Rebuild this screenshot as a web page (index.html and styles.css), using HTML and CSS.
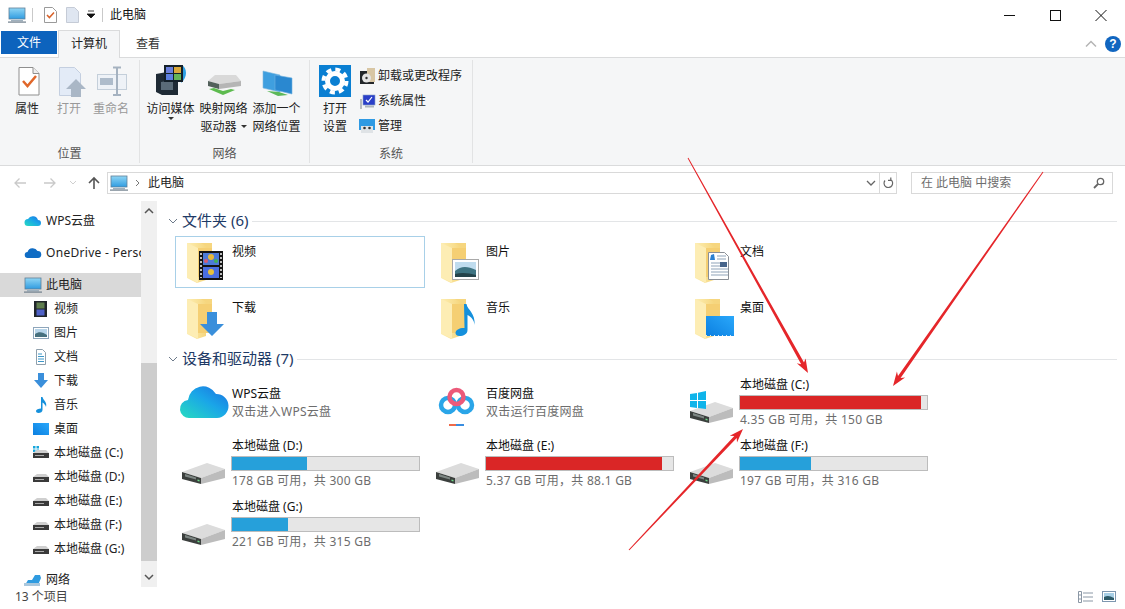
FILE: index.html
```html
<!DOCTYPE html>
<html lang="zh-CN">
<head>
<meta charset="utf-8">
<title>此电脑</title>
<link rel="stylesheet" href="styles.css">
</head>
<body>
<svg class="sprite" aria-hidden="true">
  <defs>
    <linearGradient id="scr" x1="0" y1="0" x2="0" y2="1"><stop offset="0" stop-color="#8fd6f5"/><stop offset="1" stop-color="#2f9be0"/></linearGradient>
    <linearGradient id="fold" x1="0" y1="0" x2="1" y2="0"><stop offset="0" stop-color="#fdeeb3"/><stop offset="1" stop-color="#f6d77f"/></linearGradient>
    <linearGradient id="wps" x1="0" y1="1" x2="1" y2="0"><stop offset="0" stop-color="#27dcc0"/><stop offset=".55" stop-color="#1aa5e8"/><stop offset="1" stop-color="#1b6fe0"/></linearGradient>
    <linearGradient id="dsk" x1="0" y1="1" x2="1" y2="0"><stop offset="0" stop-color="#0b7fe0"/><stop offset="1" stop-color="#2aa8fb"/></linearGradient>

    <g id="pc"><rect x="1" y="1" width="16" height="11" fill="url(#scr)" stroke="#5f7f98" stroke-width=".8"/><rect x="3" y="13" width="12" height="1.4" fill="#9fb0bd"/><rect x="0" y="14.5" width="18" height="1.2" fill="#6f7f8c"/></g>
    <g id="checkdoc"><path d="M.5.5h8l4 4v11H.5z" fill="#fff" stroke="#9a9a9a"/><path d="M3 8l2.4 2.6L10 5.5" fill="none" stroke="#d8622a" stroke-width="1.5"/></g>

    <g id="folder"><path d="M12 2h17v34H12z" fill="#f6d67f"/><path d="M4 2h14l5 3v34l-9 3-10-5z" fill="url(#fold)"/><path d="M15 7h14v29H15z" fill="#f5cf73"/><path d="M4 2l11 5v35L4 36z" fill="#fdedb4"/></g>
    <g id="ov-film"><rect x="16" y="10" width="24" height="29" fill="#141414"/><rect x="20" y="12" width="16" height="12" fill="#4d7bd8"/><rect x="20" y="26" width="16" height="11" fill="#4a6ee0"/><circle cx="28" cy="16" r="3" fill="#e8b93a"/><circle cx="28" cy="31" r="3" fill="#e8c13a"/><circle cx="23" cy="20" r="2" fill="#d35c72"/><circle cx="33" cy="20" r="2" fill="#3fb05a"/><path d="M18 12v25M38 12v25" stroke="#e8e8e8" stroke-width="1.6" stroke-dasharray="2 2"/></g>
    <g id="ov-pic"><rect x="15.5" y="18.500" width="26" height="20" fill="#fff" stroke="#a9a9a9"/><path d="M18 21h21v15H18z" fill="#bfdcee"/><path d="M18 30c6-5 12-5 21-1v7H18z" fill="#3e7482"/><path d="M18 33c7-2 14-1 21 1v2H18z" fill="#24434a"/></g>
    <g id="ov-down"><path d="M24 15h10v12h7L29 39 17 27h7z" fill="#3a8fdb"/></g>
    <g id="ov-music"><path d="M27 7h2.500c1 6 9 9 8 21-.4-5-3-8-7-10v15c0 4-4 6-8 6-3 0-4-2-4-3 0-3 4-5 8-5h1z" fill="#1590dc"/></g>
    <g id="ov-doc"><path d="M17.500 11.500h16l4 4v23h-20z" fill="#fff" stroke="#8a8f96"/><path d="M20 14l3-1 1 6h-5z" fill="#2a7fd0"/><path d="M26 15h9M26 18h9M20 22h9M20 25h9M20 28h17M20 31h17M20 34h17" stroke="#8fa3b8"/><rect x="29" y="21" width="7" height="5" fill="#47648a"/></g>
    <g id="ov-desk"><rect x="15" y="19" width="28" height="20" fill="url(#dsk)"/><path d="M15 38.500h28" stroke="#d9ecfa" stroke-dasharray="1 3"/></g>

    <g id="drive"><path d="M-1 30l25-9 18 6-24 9z" fill="#dcdcdc"/><path d="M18 36l24-9v9l-24 6z" fill="#bcbcbc"/><path d="M-1 30l19 6v6L-1 37z" fill="#3b3f3d"/><path d="M2 32l11 3.500v2L2 34.500z" fill="#7d8683"/><path d="M14.500 37.500l2 .6v1.400l-2-.6z" fill="#6fdc8a"/></g>
    <g id="winlogo"><path d="M-1 13l7-1v7h-7zM7 11.800l8-1.800v9h-8zM-1 20h7v7l-7-1zM7 20h8v8l-8-1z" fill="#0fb4ea"/></g>
    <g id="mini-drive"><path d="M0 8l4-3h9l3 3v5H0z" fill="#cfcfcf"/><rect y="8" width="16" height="5" fill="#3a3a3a"/><rect x="2" y="10" width="9" height="1" fill="#aaa"/></g>

    <g id="gear"><rect x="2" y="5" width="32" height="32" fill="#0a7fd2"/><circle cx="18" cy="21" r="7.500" fill="none" stroke="#fff" stroke-width="5"/><circle cx="18" cy="21" r="11.500" fill="none" stroke="#fff" stroke-width="4" stroke-dasharray="5.030 4"/></g>
  </defs>
</svg>

<div class="window">
  <header class="titlebar">
    <svg class="t-pc"><use href="#pc"/></svg>
    <i class="t-sep"></i>
    <svg class="t-doc"><use href="#checkdoc"/></svg>
    <svg class="t-doc"><path d="M.5.5h8l4 4v11H.5z" fill="#dfe6f1" stroke="#c5cbd6"/></svg>
    <svg class="t-caret" viewBox="0 0 8 8"><path d="M1 0h6M0 3h8L4 7z" stroke="#111" fill="#111" stroke-width=".8"/></svg>
    <i class="t-sep"></i>
    <span class="t-name">此电脑</span>
    <div class="wincaps">
      <svg viewBox="0 0 46 30"><path d="M18 15.500h11" stroke="#111"/></svg>
      <svg viewBox="0 0 46 30"><rect x="18.500" y="10.500" width="10" height="10" fill="none" stroke="#111"/></svg>
      <svg viewBox="0 0 46 30"><path d="M17.500 10l11 11M28.500 10l-11 11" stroke="#111" fill="none"/></svg>
    </div>
  </header>

  <nav class="tabs">
    <span class="tab file">文件</span>
    <span class="tab active">计算机</span>
    <span class="tab">查看</span>
    <div class="tabs-right">
      <svg class="collapse" viewBox="0 0 12 8"><path d="M1 6.500l5-5 5 5" fill="none" stroke="#b5b5b5" stroke-width="1.500"/></svg>
      <span class="help">?</span>
    </div>
  </nav>

  <section class="ribbon">
    <div class="group g-loc">
      <div class="items">
        <div class="big w42">
          <svg class="big-ic"><path d="M10 7.500h14l6 6v21.500H10z" fill="#fff" stroke="#8f8f8f"/><path d="M24 7.500v6h6" fill="#eee" stroke="#8f8f8f"/><path d="M14 21l4.500 5L27 16" fill="none" stroke="#e0672a" stroke-width="2.500"/></svg>
          <span>属性</span>
        </div>
        <div class="big w42 dim">
          <svg class="big-ic"><path d="M8.500 7.500h15l6 6v22H8.500z" fill="#e3ebf7" stroke="#c4cfe0"/><path d="M25 19l10 10h-5v8h-10v-8h-5z" fill="#aab7c6"/></svg>
          <span>打开</span>
        </div>
        <div class="big w42 dim">
          <svg class="big-ic"><rect x="4.500" y="14.500" width="29" height="15" fill="#eef2f7" stroke="#c4cfda"/><rect x="7" y="18" width="13" height="7" fill="#aebccb"/><path d="M20 7.500h8M24 7.500v27.500M20 35h8" stroke="#a5b2c0" stroke-width="2" fill="none"/></svg>
          <span>重命名</span>
        </div>
      </div>
      <div class="g-label">位置</div>
    </div>

    <div class="group g-net">
      <div class="items">
        <div class="big w53">
          <svg class="big-ic"><path d="M29 5c5 3 6 12-1 18z" fill="#2d9fe3"/><path d="M3 14l22-4v25H9l-6-3z" fill="#1e2a35"/><path d="M8 22l12-2v10H8z" fill="#5a6b78"/><rect x="11" y="5" width="19" height="17" fill="#14202a"/><rect x="13" y="7" width="7" height="6" fill="#6a7fdc"/><rect x="21" y="7" width="7" height="6" fill="#d9a83a"/><rect x="13" y="14" width="7" height="6" fill="#5b7fe0"/><rect x="21" y="14" width="7" height="6" fill="#64b457"/></svg>
          <span>访问媒体</span>
          <i class="caret"></i>
        </div>
        <div class="big w53">
          <svg class="big-ic"><path d="M9 15h21l5 6-22 3-11-3z" fill="#d9d9d9"/><path d="M2 21l11 3v5l-11-3z" fill="#52605a"/><path d="M13 24l22-3v5l-22 3z" fill="#b5b5b5"/><path d="M3 29l14 6 12-5-4-1-8 2-9-3z" fill="#5dbb4f"/></svg>
          <span>映射网络<br>驱动器<i class="caret inline"></i></span>
        </div>
        <div class="big w53">
          <svg class="big-ic"><path d="M4 11l17 4v17L4 28z" fill="#3f9fdf" stroke="#7fb9de" stroke-width=".6"/><path d="M16 15l17 3v16l-17-4z" fill="#2a88d0" stroke="#6fb2e0" stroke-width=".6"/><path d="M8 31l11 5 10-1-9-3z" fill="#5cb85a"/></svg>
          <span>添加一个<br>网络位置</span>
        </div>
      </div>
      <div class="g-label">网络</div>
    </div>

    <div class="group g-sys">
      <div class="items">
        <div class="big w36">
          <svg class="big-ic"><use href="#gear"/></svg>
          <span>打开<br>设置</span>
        </div>
        <div class="smalls">
          <div class="small"><svg class="s-ic"><rect x="1" y="3" width="14" height="13" fill="#22262a"/><path d="M8 0h8v14H8z" fill="#d8c6a4"/><circle cx="7.500" cy="10" r="4.500" fill="#e4e4e4"/><circle cx="7.500" cy="10" r="1.200" fill="#333"/></svg><span>卸载或更改程序</span></div>
          <div class="small"><svg class="s-ic"><rect x="4" y="2" width="12" height="10" fill="#2a3fc8" stroke="#8aa0c8" stroke-width=".6"/><path d="M7 7l2 2 4-5" stroke="#fff" fill="none" stroke-width="1.200"/><rect x="1" y="6" width="2" height="10" fill="#b8bcc0"/><rect x="6" y="12.500" width="9" height="2" fill="#aeb6bd"/></svg><span>系统属性</span></div>
          <div class="small"><svg class="s-ic"><rect x="0" y="1" width="16" height="11" fill="#2f9ae3"/><rect x="2" y="8" width="12" height="7" fill="#dfe3e6"/><circle cx="5.500" cy="10" r="1.300" fill="#333"/><circle cx="10.500" cy="10" r="1.300" fill="#333"/></svg><span>管理</span></div>
        </div>
      </div>
      <div class="g-label">系统</div>
    </div>
  </section>

  <div class="addr">
    <div class="navbtns">
      <svg viewBox="0 0 14 12" class="nb"><path d="M13 6H2M6.500 1.500L2 6l4.500 4.500" fill="none" stroke="#c9c9c9" stroke-width="1.300"/></svg>
      <svg viewBox="0 0 14 12" class="nb"><path d="M1 6h11M7.500 1.500L12 6l-4.500 4.500" fill="none" stroke="#c9c9c9" stroke-width="1.300"/></svg>
      <svg viewBox="0 0 8 6" class="nb-d"><path d="M1 1l3 3 3-3" fill="none" stroke="#cfcfcf"/></svg>
      <svg viewBox="0 0 14 14" class="nb-u"><path d="M7 13V2M2 7l5-5 5 5" fill="none" stroke="#555" stroke-width="1.600"/></svg>
    </div>
    <div class="addrbox">
      <svg class="a-pc"><use href="#pc"/></svg>
      <svg viewBox="0 0 6 8" class="a-sep"><path d="M1 1l3 3-3 3" fill="none" stroke="#777"/></svg>
      <span class="a-text">此电脑</span>
      <svg viewBox="0 0 10 6" class="a-chev"><path d="M1 1l4 4 4-4" fill="none" stroke="#666" stroke-width="1.300"/></svg>
      <span class="a-refresh"><svg viewBox="0 0 12 12"><path d="M8.500 2.500A4.300 4.300 0 1 1 3 3.500M8.800 .5v2.800H6" fill="none" stroke="#666" stroke-width="1.200"/></svg></span>
    </div>
    <div class="searchbox">
      <span>在 此电脑 中搜索</span>
      <svg viewBox="0 0 12 12"><circle cx="7.500" cy="4.500" r="3.200" fill="none" stroke="#666" stroke-width="1.300"/><path d="M5 7l-4 4" stroke="#666" stroke-width="1.800"/></svg>
    </div>
  </div>

  <main class="main">
    <aside class="nav">
      <div class="row top first"><svg class="n-ic" viewBox="0 0 18 14"><path d="M4 12a3.500 3.500 0 0 1 0-7 5.500 5.500 0 0 1 10 1 3 3 0 0 1 0 6z" fill="url(#wps)"/></svg><span>WPS云盘</span></div>
      <div class="row top"><svg class="n-ic" viewBox="0 0 18 14"><path d="M4 12a3 3 0 0 1-.5-6 5.500 5.500 0 0 1 10-1 3.500 3.500 0 0 1 .5 7z" fill="#0f6cc4"/></svg><span class="wide">OneDrive - Personal</span></div>
      <div class="row top sel"><svg class="n-ic"><use href="#pc"/></svg><span>此电脑</span></div>
      <div class="row kid"><svg class="k-ic"><rect x="1" y="0" width="13" height="16" fill="#20252a"/><rect x="3.500" y="1.500" width="8" height="6" fill="#5f7d4e"/><rect x="3.500" y="8.500" width="8" height="6" fill="#4f62c8"/></svg><span>视频</span></div>
      <div class="row kid"><svg class="k-ic"><rect x=".5" y="2.500" width="15" height="11" fill="#fff" stroke="#8ea6bb"/><path d="M2 4h12v8H2z" fill="#b7d5ea"/><path d="M2 9c4-3 8-2 12 1v2H2z" fill="#47717f"/></svg><span>图片</span></div>
      <div class="row kid"><svg class="k-ic"><path d="M3.500 .5h6l3 3v12h-9z" fill="#fff" stroke="#8fa0ad"/><path d="M5 5h4M5 7.500h6M5 10h6M5 12.500h6" stroke="#3c97c9"/></svg><span>文档</span></div>
      <div class="row kid"><svg class="k-ic"><path d="M5 0h6v7h4l-7 8-7-8h4z" fill="#3a8fdb"/></svg><span>下载</span></div>
      <div class="row kid"><svg class="k-ic"><path d="M8 0h1.500c.5 3 5 5 3.500 10-.5-2-2-3.500-3.500-4.500V13c0 2-2 3-4 3-1.500 0-2.500-1-2.500-2 0-1.500 2.500-2.500 5-2.500z" fill="#1590dc"/></svg><span>音乐</span></div>
      <div class="row kid"><svg class="k-ic"><rect y="2" width="16" height="12" fill="url(#dsk)"/></svg><span>桌面</span></div>
      <div class="row kid"><svg class="k-ic"><path d="M0 1h2.500v2.500H0zM3.500 1H6v2.500H3.500zM0 4.500h2.500V7H0zM3.500 4.500H6V7H3.500z" fill="#16a6dc"/><use href="#mini-drive"/></svg><span>本地磁盘 (C:)</span></div>
      <div class="row kid"><svg class="k-ic"><use href="#mini-drive"/></svg><span>本地磁盘 (D:)</span></div>
      <div class="row kid"><svg class="k-ic"><use href="#mini-drive"/></svg><span>本地磁盘 (E:)</span></div>
      <div class="row kid"><svg class="k-ic"><use href="#mini-drive"/></svg><span>本地磁盘 (F:)</span></div>
      <div class="row kid"><svg class="k-ic"><use href="#mini-drive"/></svg><span>本地磁盘 (G:)</span></div>
      <div class="row top last"><svg class="n-ic" viewBox="0 0 18 14"><path d="M1 12l3-5h4l3-5h5l1 3-3 7z" fill="#2f9be0"/><rect x="0" y="10" width="16" height="3" fill="#a9c7dd"/></svg><span>网络</span></div>
    </aside>

    <div class="scroll">
      <svg class="sb-btn" viewBox="0 0 16 20"><path d="M4 12l4-4 4 4" fill="none" stroke="#555" stroke-width="1.500"/></svg>
      <div class="sb-gap"></div>
      <div class="sb-thumb"></div>
      <div class="sb-rest"></div>
      <svg class="sb-btn" viewBox="0 0 16 20"><path d="M4 8l4 4 4-4" fill="none" stroke="#555" stroke-width="1.500"/></svg>
    </div>

    <div class="content">
      <div class="sec">
        <svg viewBox="0 0 10 6" class="sec-chev"><path d="M1 1l4 4 4-4" fill="none" stroke="#6d7a8a"/></svg>
        <span>文件夹 (6)</span><i></i>
      </div>
      <div class="grid folders">
        <div class="tile selected"><svg class="ic"><use href="#folder"/><use href="#ov-film"/></svg><div class="name">视频</div></div>
        <div class="tile"><svg class="ic"><use href="#folder"/><use href="#ov-pic"/></svg><div class="name">图片</div></div>
        <div class="tile"><svg class="ic"><use href="#folder"/><use href="#ov-doc"/></svg><div class="name">文档</div></div>
        <div class="tile"><svg class="ic"><use href="#folder"/><use href="#ov-down"/></svg><div class="name">下载</div></div>
        <div class="tile"><svg class="ic"><use href="#folder"/><use href="#ov-music"/></svg><div class="name">音乐</div></div>
        <div class="tile"><svg class="ic"><use href="#folder"/><use href="#ov-desk"/></svg><div class="name">桌面</div></div>
      </div>
      <div class="sec">
        <svg viewBox="0 0 10 6" class="sec-chev"><path d="M1 1l4 4 4-4" fill="none" stroke="#6d7a8a"/></svg>
        <span>设备和驱动器 (7)</span><i></i>
      </div>
      <div class="grid drives">
        <div class="tile app">
          <svg class="ic"><path d="M8 37a9 9 0 0 1-2-18 15 15 0 0 1 28-6 12 12 0 0 1 1 24z" fill="url(#wps)" transform="translate(-1 0)"/></svg>
          <div class="info"><div class="name">WPS云盘</div><div class="sub">双击进入WPS云盘</div></div>
        </div>
        <div class="tile app">
          <svg class="ic"><circle cx="11" cy="24" r="7" fill="none" stroke="#2aa5e8" stroke-width="4.500"/><circle cx="28" cy="24" r="7" fill="none" stroke="#2aa5e8" stroke-width="4.500"/><circle cx="19.500" cy="16" r="7" fill="none" stroke="#ec5a7a" stroke-width="4.500"/><rect x="12" y="43" width="7" height="2" fill="#ee6a4a"/><rect x="19" y="43" width="8" height="2" fill="#3a8ee0"/></svg>
          <div class="info"><div class="name">百度网盘</div><div class="sub">双击运行百度网盘</div></div>
        </div>
        <div class="tile">
          <svg class="ic"><use href="#drive"/><use href="#winlogo"/></svg>
          <div class="info"><div class="name">本地磁盘 (C:)</div><div class="bar"><b class="full" style="width:97%"></b></div><div class="sub">4.35 GB 可用，共 150 GB</div></div>
        </div>
        <div class="tile">
          <svg class="ic"><use href="#drive"/></svg>
          <div class="info"><div class="name">本地磁盘 (D:)</div><div class="bar"><b style="width:40%"></b></div><div class="sub">178 GB 可用，共 300 GB</div></div>
        </div>
        <div class="tile">
          <svg class="ic"><use href="#drive"/></svg>
          <div class="info"><div class="name">本地磁盘 (E:)</div><div class="bar"><b class="full" style="width:94%"></b></div><div class="sub">5.37 GB 可用，共 88.1 GB</div></div>
        </div>
        <div class="tile">
          <svg class="ic"><use href="#drive"/></svg>
          <div class="info"><div class="name">本地磁盘 (F:)</div><div class="bar"><b style="width:38%"></b></div><div class="sub">197 GB 可用，共 316 GB</div></div>
        </div>
        <div class="tile">
          <svg class="ic"><use href="#drive"/></svg>
          <div class="info"><div class="name">本地磁盘 (G:)</div><div class="bar"><b style="width:30%"></b></div><div class="sub">221 GB 可用，共 315 GB</div></div>
        </div>
      </div>
    </div>
  </main>

  <footer class="status">
    <span>13 个项目</span>
    <div class="views">
      <svg viewBox="0 0 16 12"><path d="M.5.5h3v11h-3zM.5 4h3M.5 8h3M5 2h10M5 6h10M5 10h10" fill="none" stroke="#8a97a5"/></svg>
      <svg viewBox="0 0 14 12"><rect x=".5" y=".5" width="13" height="10" fill="#fff" stroke="#7e97b0"/><path d="M2 2h10v7H2z" fill="#a7cfe6"/><path d="M2 6c4-2 6-1 10 1v2H2z" fill="#2d5a68"/></svg>
    </div>
  </footer>

  <svg class="arrows" viewBox="0 0 1125 609" aria-hidden="true">
    <polygon points="808,373 805.6,358.4 804,362.6 688.400,157.800 687.600,158.200 801.200,364.200 796.800,363.200" fill="#e5262a"/>
    <polygon points="893,386 905.100,377.400 900.600,377.900 1043.400,172.300 1042.600,171.700 898,376.100 896.900,371.600" fill="#e5262a"/>
    <polygon points="743,429 737,442.600 736.700,438.100 629.400,550.300 628.600,549.700 734.300,435.900 729.800,435.800" fill="#e5262a"/>
  </svg>
</div>
</body>
</html>
```
FILE: styles.css
```css
* { box-sizing: border-box; }
html, body { margin: 0; height: 609px; overflow: hidden; background: #fff; }
body { font: 12px/16px "Noto Sans", "Noto Sans CJK SC", sans-serif; color: #111; }
svg { display: block; overflow: visible; flex: none; }
.sprite { position: absolute; width: 0; height: 0; }

.window { position: relative; display: flex; flex-direction: column; width: 1125px; height: 609px; }

/* title bar */
.titlebar { display: flex; align-items: center; height: 30px; padding: 0 0 0 8px; flex: none; }
.t-pc { width: 18px; height: 16px; margin-right: 6px; }
.t-sep { width: 1px; height: 14px; background: #c9c9c9; margin-right: 11px; }
.t-doc { width: 13px; height: 16px; margin-right: 9px; }
.t-caret { width: 8px; height: 8px; margin: 0 7px 0 -1px; }
.t-name { margin-left: -4px; }
.wincaps { display: flex; margin-left: auto; margin-right: 1px; }
.wincaps svg { width: 46px; height: 30px; }

/* tabs */
.tabs { display: flex; height: 28px; padding-left: 1px; flex: none; border-bottom: 1px solid #dadbdc; }
.tab { width: 56px; height: 27px; line-height: 28px; text-align: center; color: #333; }
.tab.file { height: 23px; line-height: 23px; background: #0d63bd; color: #fff; margin-top: 1px; margin-right: 1px; }
.tab.active { width: 62px; height: 28px; line-height: 26px; background: #f5f6f7; border: 1px solid #dadbdc; border-bottom: 0; color: #222; }
.tabs-right { display: flex; align-items: center; gap: 8px; margin-left: auto; padding-right: 4px; }
.collapse { width: 12px; height: 8px; }
.help { width: 16px; height: 16px; border-radius: 50%; background: #1166c0; color: #fff; font: bold 12px/16px "Liberation Sans", sans-serif; text-align: center; }

/* ribbon */
.ribbon { display: flex; height: 108px; background: #f5f6f7; border-bottom: 1px solid #dadbdc; flex: none; }
.group { display: flex; flex-direction: column; height: 103px; margin-top: 2px; border-right: 1px solid #e2e3e4; }
.g-loc { width: 140px; padding-left: 6px; }
.g-net { width: 170px; padding-left: 4px; }
.g-sys { width: 163px; padding-left: 7px; }
.items { display: flex; height: 85px; }
.g-label { text-align: center; line-height: 18px; color: #555; margin-left: -6px; }
.g-net .g-label { margin-left: -4px; }
.g-sys .g-label { margin-left: -7px; }
.big { display: flex; flex-direction: column; align-items: center; text-align: center; line-height: 18px; flex: none; color: #222; }
.big.dim { color: #999; }
.w42 { width: 42px; }
.w53 { width: 53px; }
.w36 { width: 36px; }
.big-ic { width: 36px; height: 40px; }
.caret { display: block; width: 0; height: 0; border: 3px solid transparent; border-top: 3px solid #333; border-bottom: 0; margin-top: -1px; }
.caret.inline { display: inline-block; margin: 0 0 2px 4px; vertical-align: middle; }
.smalls { display: flex; flex-direction: column; margin: 3px 0 0 6px; }
.small { display: flex; align-items: center; gap: 3px; height: 25px; color: #222; }
.s-ic { width: 16px; height: 16px; }

/* address row */
.addr { display: flex; align-items: center; height: 35px; flex: none; padding-bottom: 1px; }
.navbtns { display: flex; align-items: center; width: 107px; padding-left: 13px; }
.nb { width: 14px; height: 12px; margin-right: 16px; }
.nb-d { width: 8px; height: 6px; margin-left: -4px; margin-right: 10px; }
.nb-u { width: 14px; height: 14px; }
.addrbox { display: flex; align-items: center; width: 790px; height: 22px; border: 1px solid #d9d9d9; padding-left: 2px; }
.a-pc { width: 18px; height: 16px; }
.a-sep { width: 6px; height: 8px; margin: 0 7px 0 7px; }
.a-text { color: #222; }
.a-chev { width: 10px; height: 6px; margin-left: auto; margin-right: 2px; }
.a-refresh { display: flex; align-items: center; justify-content: center; width: 17px; height: 20px; border-left: 1px solid #d9d9d9; margin-left: 1px; }
.a-refresh svg { width: 12px; height: 12px; }
.searchbox { display: flex; align-items: center; justify-content: space-between; width: 202px; height: 22px; margin-left: 14px; border: 1px solid #d9d9d9; padding: 0 7px 0 9px; color: #6d6d6d; }
.searchbox svg { width: 12px; height: 12px; }

/* main */
.main { display: flex; height: 388px; flex: none; overflow: hidden; }
.nav { width: 141px; padding-top: 8px; overflow: hidden; flex: none; color: #222; }
.row { display: flex; align-items: center; height: 24px; white-space: nowrap; }
.row.top { padding-left: 24px; gap: 4px; }
.row.top + .row.top { margin-top: 8px; }
.row.top.last { margin-top: 7px; }
.row.kid { padding-left: 33px; gap: 5px; }
.row.sel { background: #d9d9d9; }
.wide { letter-spacing: .3px; }
.n-ic { width: 18px; height: 16px; }
.k-ic { width: 16px; height: 16px; }
.scroll { display: flex; flex-direction: column; width: 16px; height: 386px; background: #f0f0f0; flex: none; }
.sb-btn { width: 16px; height: 20px; }
.sb-gap { height: 142px; }
.sb-thumb { height: 198px; background: #cdcdcd; }
.sb-rest { flex: 1; }

.content { flex: 1; padding: 8px 8px 0 14px; color: #111; }
.sec { display: flex; align-items: center; height: 24px; margin-left: -3px; color: #1e3a66; font-size: 15px; }
.sec span { margin-top: -2px; }
.sec-chev { width: 10px; height: 6px; margin-right: 4px; }
.sec i { flex: 1; height: 1px; background: #e3e5e7; margin-left: 4px; }
.grid { display: grid; grid-template-columns: repeat(3, 250px); column-gap: 4px; padding-left: 4px; }
.folders { grid-auto-rows: 52px; row-gap: 4px; padding-top: 3px; margin-bottom: 3px; }
.drives { grid-auto-rows: 57px; row-gap: 4px; padding-top: 5px; }
.tile { display: flex; padding: 5px 0 0 8px; border: 1px solid transparent; }
.tile.selected { border-color: #a8d0e8; }
.ic { width: 44px; height: 48px; margin-top: -1px; margin-right: 5px; margin-left: -1px; }
.folders .name { padding-top: 2px; }
.info { width: 189px; margin-top: -5px; }
.name { line-height: 16px; color: #111; }
.app .name, .app .sub { line-height: 18px; }
.app .info { margin-top: 1px; padding-top: 2px; }
.sub { line-height: 17px; color: #6d6d6d; white-space: nowrap; letter-spacing: .25px; }
.bar { height: 15px; margin: 2px 1px 1px -1px; background: #e6e6e6; border: 1px solid #bcbcbc; }
.bar b { display: block; height: 100%; background: #26a0da; margin: 0; }
.bar b.full { background: #da2626; }

/* status */
.status { display: flex; align-items: center; justify-content: space-between; height: 18px; padding: 0 9px 2px 15px; color: #444; flex: none; }
.views { display: flex; gap: 8px; }
.views svg:first-child { width: 16px; height: 12px; }
.views svg:last-child { width: 14px; height: 12px; }

/* hand-drawn annotation arrows */
.arrows { position: absolute; left: 0; top: 0; width: 1125px; height: 609px; pointer-events: none; }
```
